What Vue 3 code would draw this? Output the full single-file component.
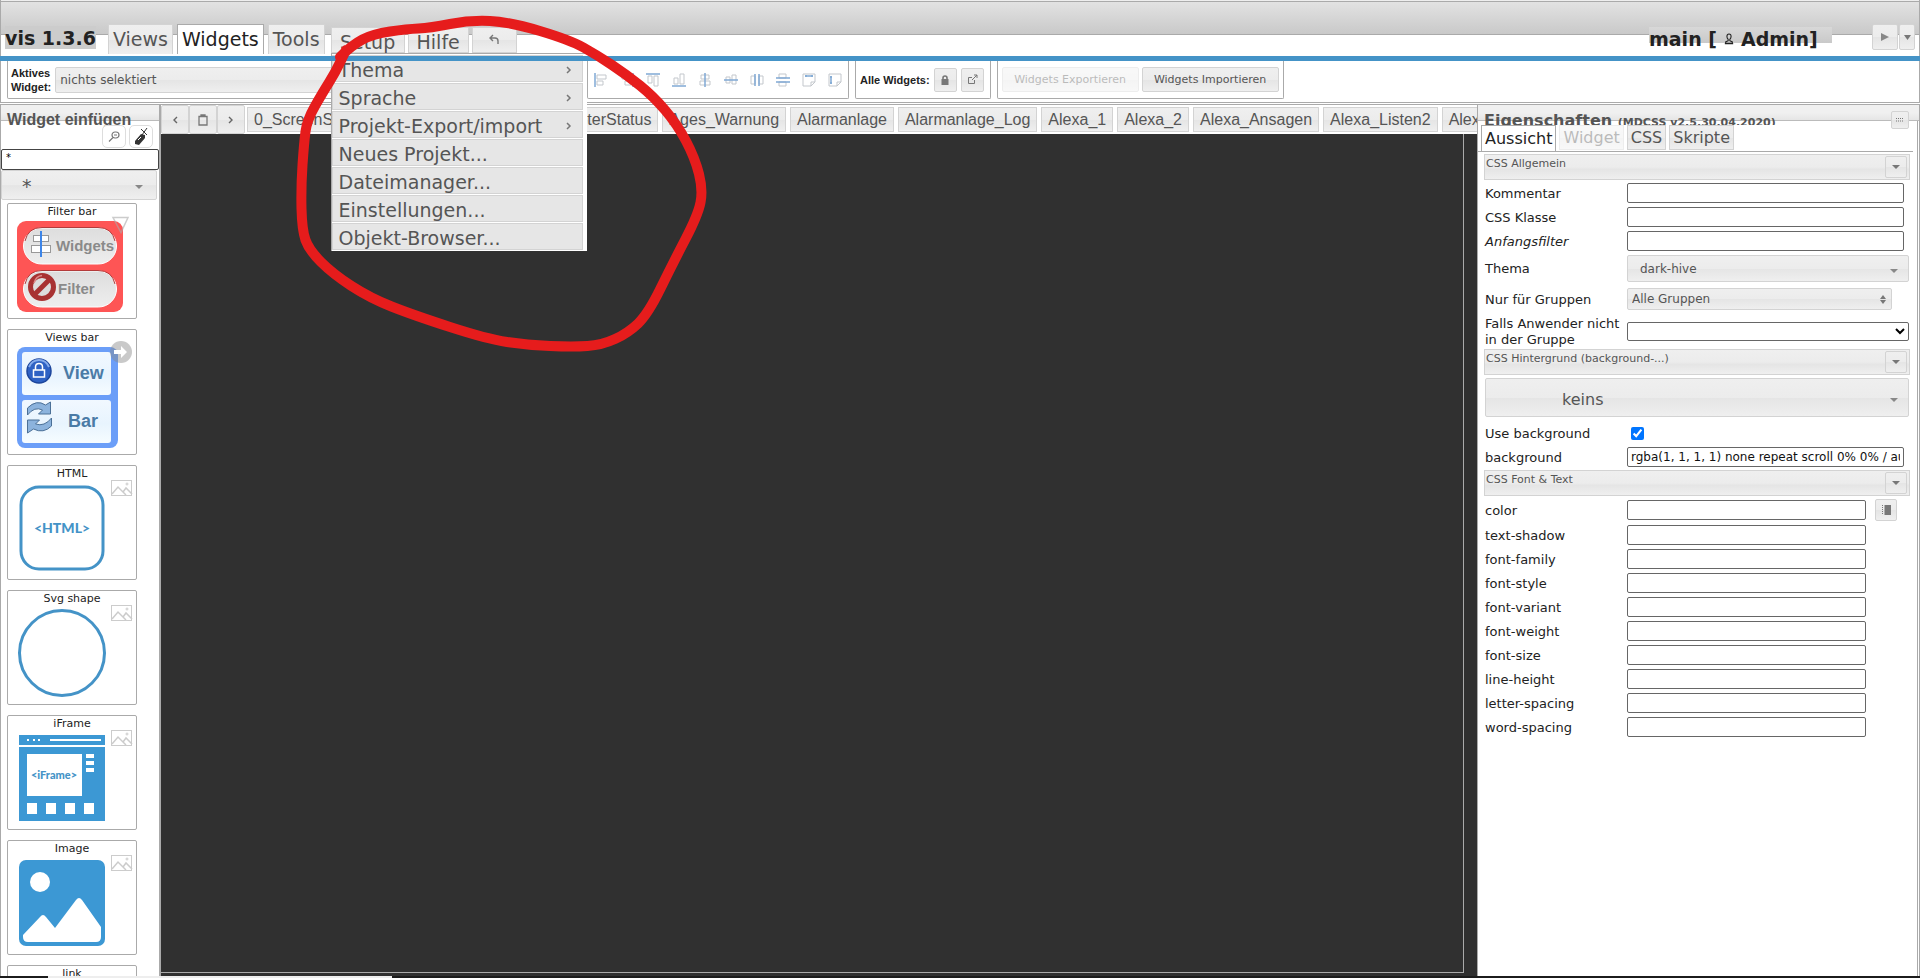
<script setup>
import { ref } from 'vue'

const tabs = ['Views', 'Widgets', 'Tools']
const menu = [
  { label: 'Thema', sub: true },
  { label: 'Sprache', sub: true },
  { label: 'Projekt-Export/import', sub: true },
  { label: 'Neues Projekt...' },
  { label: 'Dateimanager...' },
  { label: 'Einstellungen...' },
  { label: 'Objekt-Browser...' },
]
const views = ['AdapterStatus', 'Ages_Warnung', 'Alarmanlage', 'Alarmanlage_Log', 'Alexa_1', 'Alexa_2', 'Alexa_Ansagen', 'Alexa_Listen2', 'Alexa_Musik']
const alignIcons = [
  { b: 'M1 0v14', g: 'M3 2h9v4h-9zM3 8h6v4h-6z' },
  { b: 'M13 0v14', g: 'M2 2h9v4h-9zM5 8h6v4h-6z' },
  { b: 'M0 1h14', g: 'M2 3h4v7h-4zM8 3h4v10h-4z' },
  { b: 'M0 13h14', g: 'M2 5h4v6h-4zM8 1h4v10h-4z' },
  { b: 'M7 0v14', g: 'M3 2h8v4h-8zM2 8h10v4h-10z' },
  { b: 'M0 7h14', g: 'M2 4h4v6h-4zM8 2h4v9h-4z' },
  { b: 'M5 1v12M9 1v12', g: 'M1 3h4v8h-4zM9 3h4v8h-4z' },
  { b: 'M0 5h14M0 9h14', g: 'M3 1h7v4h-7zM3 9h7v4h-7z' },
  { b: 'M3 3h8M4 2v2M10 2v2', g: 'M1 1h12v8l-4 4h-8zM13 9h-4v4' },
  { b: 'M3 3v8M2 4h2M2 10h2', g: 'M1 1h12v8l-4 4h-8zM13 9h-4v4' },
]
const search = ref('*')
const useBackground = ref(true)
const background = ref('rgba(1, 1, 1, 1) none repeat scroll 0% 0% / auto padding-box border-box')
const fontRows = ['text-shadow', 'font-family', 'font-style', 'font-variant', 'font-weight', 'font-size', 'line-height', 'letter-spacing', 'word-spacing']

// Freehand marker stroke around the setup menu
const points = [
  [340, 57], [352, 45], [373, 34], [407, 29], [430, 28], [470, 20], [510, 22], [570, 40], [597, 55], [627, 75],
  [653, 96], [677, 124], [695, 158], [703, 190], [698, 215], [673, 263], [648, 314], [628, 333], [602, 345],
  [573, 347], [527, 345], [487, 339], [413, 315], [370, 298], [333, 274], [309, 250], [302, 230], [301, 187],
  [304, 143], [307, 120], [323, 92], [335, 73], [346, 50],
]
let stroke = `M${points[0].join(' ')}`
for (let i = 1; i < points.length - 1; i++) {
  const [x, y] = points[i]
  const [nx, ny] = points[i + 1]
  stroke += `Q${x} ${y} ${(x + nx) / 2} ${(y + ny) / 2}`
}
stroke += `L${points[points.length - 1].join(' ')}`
</script>

<template>
  <div class="app">
    <header class="top">
      <h1 class="brand">vis 1.3.6</h1>
      <nav class="tabs">
        <button v-for="t in tabs" :key="t" type="button" class="tab" :class="{ active: t === 'Widgets' }">{{ t }}</button>
      </nav>
      <nav class="menubar">
        <div class="setup">
          <button type="button" class="menu-btn wide">Setup</button>
          <ul class="menu">
            <li v-for="m in menu" :key="m.label">
              <button type="button" class="menu-item">
                {{ m.label }}
                <svg v-if="m.sub" width="6" height="8" viewBox="0 0 6 8"><path d="M1 1l3 3-3 3" fill="none" stroke="#777" stroke-width="1.5" /></svg>
              </button>
            </li>
          </ul>
        </div>
        <button type="button" class="menu-btn">Hilfe</button>
        <button type="button" class="menu-btn undo" aria-label="Undo">
          <svg width="12" height="12" viewBox="0 0 12 12"><path d="M5 1L2 4l3 3M2 4h5q3 0 3 3v3" fill="none" stroke="#777" stroke-width="1.4" /></svg>
        </button>
      </nav>
      <div class="user">
        <span class="mark">main [<svg width="10" height="12" viewBox="0 0 12 14"><path d="M6 1q-2.500 0-2.500 3 0 2 1.500 3.500v1.500l-3 1.500v1.500h8v-1.500l-3-1.500v-1.500q1.500-1.500 1.500-3.500 0-3-2.500-3zM1 12.500h10" fill="none" stroke="#222" stroke-width="1.3" /></svg>
          <span>Admin]</span></span>
      </div>
      <div class="run">
        <button type="button" class="btn play" aria-label="Start"><svg width="8" height="8" viewBox="0 0 8 8"><path d="M0 0l8 4-8 4z" fill="#888" /></svg></button>
        <button type="button" class="btn more" aria-label="Mehr"><svg width="7" height="5" viewBox="0 0 7 5"><path d="M0 0h7l-3.500 5z" fill="#777" /></svg></button>
      </div>
    </header>
    <div class="accent"></div>

    <section class="toolbar">
      <div class="group active-widget">
        <label for="aw">Aktives<br>Widget:</label>
        <select id="aw" class="sel"><option>nichts selektiert</option></select>
      </div>
      <div class="group icons">
        <button v-for="(ic, i) in alignIcons" :key="i" type="button" class="icon-btn" :aria-label="'Ausrichten ' + (i + 1)">
          <svg width="14" height="14" viewBox="0 0 14 14" fill="none"><path :d="ic.g" stroke="#c3c7cc" /><path :d="ic.b" stroke="#7fa8d4" stroke-width="1.500" /></svg>
        </button>
      </div>
      <div class="group all">
        <b>Alle Widgets:</b>
        <button type="button" class="btn sq" aria-label="Sperren"><svg width="10" height="12" viewBox="0 0 10 12"><path d="M3 6V4q0-2 2-2t2 2v2" fill="none" stroke="#777" stroke-width="1.600" /><path d="M1.500 5h7v6h-7z" fill="#777" /></svg></button>
        <button type="button" class="btn sq" aria-label="Öffnen"><svg width="11" height="11" viewBox="0 0 11 11" fill="none" stroke="#777"><path d="M5 3.500H1.500v6h6V6M5 6l5-5M7 1h3v3" /></svg></button>
      </div>
      <div class="group transfer">
        <button type="button" class="btn text" disabled>Widgets Exportieren</button>
        <button type="button" class="btn text">Widgets Importieren</button>
      </div>
    </section>

    <main class="body">
      <aside class="left">
        <h2 class="left-title">Widget einfügen</h2>
        <div class="left-tools">
          <button type="button" class="round" aria-label="Suche"><svg width="12" height="12" viewBox="0 0 12 12" fill="none" stroke="#777" stroke-width="1.200"><rect x="4" y="1" width="7" height="6" rx="3" /><path d="M6 4h3M5 6.500L1 10.500" /></svg></button>
          <button type="button" class="round" aria-label="Filter löschen"><svg width="14" height="18" viewBox="0 0 14 18"><path d="M1 13l6-7 4 1v3l-6 7-4-1z" fill="#333" /><path d="M7 1l6 6M13 0L8 7" stroke="#333" /><path d="M4 12l3-3" stroke="#fff" /></svg></button>
        </div>
        <input v-model="search" class="search" aria-label="Widget suchen">
        <div class="arrowed set"><select class="sel big" aria-label="Widgetset"><option>*</option></select></div>

        <div class="cards">
          <article class="card">
            <h3>Filter bar</h3>
            <svg width="128" height="99" viewBox="0 0 128 99">
              <defs><linearGradient id="pill" x2="0" y2="1"><stop offset="0" stop-color="#ddd" /><stop offset="1" stop-color="#eee" /></linearGradient></defs>
              <rect x="9" y="2" width="106" height="91" rx="9" fill="#fe5555" />
              <g fill="url(#pill)" stroke="#fff"><rect x="15.500" y="9" width="93" height="36" rx="18" /><rect x="15.500" y="52" width="93" height="36" rx="18" /></g>
              <path d="M17 22q3-13.500 17-13.500h56q14 0 17 13.500M17 65q3-13.500 17-13.500h56q14 0 17 13.500" fill="none" stroke="#b33b3b" />
              <g fill="#fff" stroke="#999"><rect x="25.500" y="16.500" width="15" height="6" /><rect x="23.500" y="26.500" width="19" height="7" /></g>
              <path d="M33 12v26" stroke="#3d85e8" stroke-width="2" />
              <circle cx="34" cy="68" r="11.500" fill="#ddd" stroke="#a83232" stroke-width="5" /><path d="M26 76l16-16" stroke="#a83232" stroke-width="5" />
              <path d="M26 64q2-7 8-7.500" fill="none" stroke="#dd8a8a" stroke-width="1.500" />
              <text x="48" y="32" class="g14">Widgets</text><text x="50" y="75" class="g14">Filter</text>
              <path d="M105-1.500h15l-7 15z" fill="none" stroke="#aaa" stroke-opacity=".6" stroke-width="1.500" />
            </svg>
          </article>
          <article class="card">
            <h3>Views bar</h3>
            <svg width="128" height="109" viewBox="0 0 128 109">
              <defs><linearGradient id="cell" x2="0" y2="1"><stop offset="0" stop-color="#f1f8ff" /><stop offset=".55" stop-color="#e8f4fe" /><stop offset="1" stop-color="#f6fcff" /></linearGradient></defs>
              <rect x="9" y="2" width="101" height="101" rx="8" fill="#6b9ef8" />
              <rect x="14" y="7" width="89" height="43" rx="3" fill="url(#cell)" /><rect x="14" y="55" width="89" height="43" rx="3" fill="url(#cell)" />
              <circle cx="31" cy="26" r="12" fill="#2f62c4" stroke="#1d469c" stroke-width="1.500" /><path d="M21 22q3-7 10-7t10 7" fill="none" stroke="#86acec" stroke-width="2" />
              <path d="M27.500 25v-3q0-3.500 3.500-3.500t3.500 3.500v3" fill="none" stroke="#fff" stroke-width="1.500" /><rect x="25.500" y="25" width="11" height="7" fill="none" stroke="#fff" stroke-width="1.500" />
              <g fill="#8cb3dd" stroke="#4b7097"><path d="M19.500 70v-7q9-9 18-3l5-3v12h-12l4-4q-8-4-15 5z" /><path d="M43.500 73v8q-8 8-18 3l-6 4V75h12l-4 4q9 3 16-6z" /></g>
              <text x="55" y="34" class="b18">View</text><text x="60" y="82" class="b18">Bar</text>
              <circle cx="113" cy="7" r="11" fill="#888" fill-opacity=".45" /><path d="M106 5h7V1l6 6-6 6V9h-7z" fill="#fff" />
            </svg>
          </article>
          <article v-for="kind in ['HTML', 'Svg shape', 'iFrame', 'Image', 'link']" :key="kind" class="card">
            <h3>{{ kind }}</h3>
            <svg width="128" height="98" viewBox="0 0 128 98">
              <g fill="none" stroke="#ccc"><rect x="103.500" y="-.5" width="20" height="15" /><path d="M104 13l6-7 8 8M115 11l3-4 6 6" stroke-width="1.500" /><circle cx="119" cy="3" r="1" /></g>
              <g v-if="kind === 'HTML'"><rect x="13" y="6" width="82" height="82" rx="18" class="line" /><text x="54" y="52" class="code14">&lt;HTML&gt;</text></g>
              <circle v-else-if="kind === 'Svg shape'" cx="54" cy="47" r="42.500" class="line" />
              <g v-else-if="kind === 'iFrame'">
                <path d="M11 4h86v10h-86zM11 16h86v74h-86z" fill="#3c98d4" />
                <path d="M19 8h2v2h-2zM25 8h2v2h-2zM30 8h2v2h-2zM42 8h51v2h-51zM19 23h55v42h-55zM78 23h8v4h-8zM78 30h8v4h-8zM78 37h8v4h-8zM19 72h10v11h-10zM38 72h10v11h-10zM57 72h10v11h-10zM76 72h10v11h-10z" fill="#fff" />
                <text x="46" y="48" class="code11">&lt;iFrame&gt;</text>
              </g>
              <g v-else-if="kind === 'Image'">
                <rect x="11" y="4" width="86" height="86" rx="7" fill="#3c98d4" /><circle cx="32" cy="26" r="10" fill="#fff" />
                <path d="M15 79L32 61q3-4 6 0l9 11 21-28q3-4 6 0l19 27v10q0 5-5 5H20q-5 0-5-5z" fill="#fff" />
              </g>
            </svg>
          </article>
        </div>
      </aside>

      <section class="center">
        <div class="view-tabs">
          <div class="nav-btns">
            <button type="button" class="btn nav" aria-label="Zurück"><svg width="6" height="8" viewBox="0 0 6 8"><path d="M5 1L2 4l3 3" fill="none" stroke="#666" stroke-width="1.400" /></svg></button>
            <button type="button" class="btn nav" aria-label="Ablage"><svg width="10" height="12" viewBox="0 0 10 12"><path d="M1 2.500h8v8.500h-8zM3 2V1h4v1" fill="none" stroke="#777" stroke-width="1.300" /></svg></button>
            <button type="button" class="btn nav" aria-label="Weiter"><svg width="6" height="8" viewBox="0 0 6 8"><path d="M1 1l3 3-3 3" fill="none" stroke="#666" stroke-width="1.400" /></svg></button>
          </div>
          <button type="button" class="view first">0_ScreenSaver</button>
          <button v-for="v in views" :key="v" type="button" class="view">{{ v }}</button>
        </div>
        <div class="canvas"><div class="sheet"></div></div>
      </section>

      <aside class="right">
        <div class="right-head">
          <h2>Eigenschaften <small>(MDCSS v2.5.30.04.2020)</small></h2>
          <button type="button" class="btn grip" aria-label="Andocken"><svg width="8" height="4" viewBox="0 0 8 4"><path d="M0 .5h8M0 3h8" stroke="#777" stroke-dasharray="1 1" /></svg></button>
        </div>
        <nav class="prop-tabs">
          <button type="button" class="ptab active">Aussicht</button>
          <button type="button" class="ptab" disabled>Widget</button>
          <button type="button" class="ptab">CSS</button>
          <button type="button" class="ptab">Skripte</button>
        </nav>
        <form class="props" @submit.prevent>
          <div class="bar">CSS Allgemein<button type="button" class="btn fold" aria-label="Einklappen"></button></div>
          <div class="row"><label for="p1">Kommentar</label><input id="p1" class="field"></div>
          <div class="row"><label for="p2">CSS Klasse</label><input id="p2" class="field"></div>
          <div class="row"><label for="p3"><i>Anfangsfilter</i></label><input id="p3" class="field"></div>
          <div class="row theme"><label for="p4">Thema</label><div class="arrowed"><select id="p4" class="sel"><option>dark-hive</option></select></div></div>
          <div class="row groups"><label for="p5">Nur für Gruppen</label><div class="multi"><select id="p5" class="sel"><option>Alle Gruppen</option></select><svg width="6" height="9" viewBox="0 0 6 9"><path d="M3 0l3 4H0zM0 5h6l-3 4z" fill="#777" /></svg></div></div>
          <div class="row users"><label for="p6">Falls Anwender nicht in der Gruppe</label><select id="p6" class="native"><option></option></select></div>
          <div class="bar">CSS Hintergrund (background-...)<button type="button" class="btn fold" aria-label="Einklappen"></button></div>
          <div class="preset"><div class="arrowed"><select class="sel" aria-label="Hintergrund"><option>keins</option></select></div></div>
          <div class="row"><label for="p7">Use background</label><input id="p7" v-model="useBackground" type="checkbox" class="check"></div>
          <div class="row"><label for="p8">background</label><input id="p8" v-model="background" class="field"></div>
          <div class="bar">CSS Font &amp; Text<button type="button" class="btn fold" aria-label="Einklappen"></button></div>
          <div class="row color"><label for="p9">color</label><input id="p9" class="field"><button type="button" class="btn pick" aria-label="Farbe wählen"><svg width="9" height="10" viewBox="0 0 9 10"><path d="M2.500 0H9v10H2.500z" fill="#777" /><path d="M.5 0v10" stroke="#777" stroke-dasharray="1 1" /></svg></button></div>
          <div v-for="f in fontRows" :key="f" class="row font"><label :for="f">{{ f }}</label><input :id="f" class="field"></div>
        </form>
      </aside>
    </main>
    <footer class="strip"></footer>

    <svg class="marker" width="720" height="370" viewBox="0 0 720 370" aria-hidden="true"><path :d="stroke" /></svg>
  </div>
</template>

<style>
body { margin: 0; overflow: hidden; }
</style>

<style scoped>
* { box-sizing: border-box; }
.app { position: relative; display: flex; flex-direction: column; height: 100vh; overflow: hidden; background: #fff; color: #222; font-family: "DejaVu Sans", Verdana, sans-serif; font-size: 12px; }
button, input, select { font-family: inherit; margin: 0; }
button { padding: 0; }
h1, h2, h3, ul { margin: 0; padding: 0; }
svg { display: block; overflow: visible; flex: none; }
.btn, .sel, .menu-btn, .tab, .ptab, .view { border: 1px solid #d3d3d3; background: linear-gradient(#efefef 0%, #ececec 50%, #e5e5e5 52%, #efefef 100%); color: #555; }
.btn { display: flex; align-items: center; justify-content: center; border-radius: 2px; }

.top { display: flex; align-items: flex-start; flex: none; height: 56px; padding: 0 4px; border: solid #aaa; border-width: 0 1px; background: linear-gradient(#eee 0 1px, #aaa 1px 2px, #e2e2e2 2px, #c9c9c9 34px, #aaa 34px 35px, #fff 35px); }
.brand { margin-top: 26px; height: 23px; line-height: 24px; background: #ccc; font-size: 19px; font-weight: 700; }
.tabs { display: flex; gap: 4px; margin: 24px 0 0 12px; }
.tab { height: 30px; padding: 0 4px 2px; border-bottom: 0; font-size: 19px; line-height: 26px; }
.tab.active { background: #fff; color: #222; border-color: #aaa; }
.menubar { display: flex; gap: 3px; margin: 27px 0 0 6px; }
.setup { position: relative; }
.menu-btn { display: block; height: 26px; padding: 0 8px; font-size: 19px; line-height: 29px; }
.menu-btn.wide { width: 74px; }
.undo { display: flex; justify-content: center; width: 45px; padding-top: 6px; }
.menu { position: absolute; z-index: 10; top: 26px; left: 0; width: 256px; padding: 1px 4px 0 0; border: 1px solid #aaa; border-width: 1px 0 0 1px; background: #fff; list-style: none; }
.menu-item { display: flex; align-items: center; justify-content: space-between; width: 100%; height: 27px; margin-bottom: 1px; padding: 3px 10px 0 6px; border: 1px solid #d3d3d3; background: #e6e6e6; color: #555; font-size: 19px; line-height: 22px; }
.user { margin: 27px 40px 0 auto; }
.mark { display: flex; align-items: center; gap: 7px; width: 183px; height: 16px; padding-top: 7px; line-height: 22px; background: linear-gradient(#d8d8d8, #c9c9c9); font-size: 19px; font-weight: 700; white-space: nowrap; }
.run { display: flex; gap: 1px; margin-top: 24px; }
.play { width: 26px; height: 26px; }
.more { width: 16px; height: 26px; }
.accent { position: relative; z-index: 20; flex: none; height: 5px; background: #4493c7; }

.toolbar { display: flex; gap: 6px; flex: none; height: 42px; padding: 0 6px 3px; border: 1px solid #aaa; border-top: 0; font-family: "Liberation Sans", Arial, sans-serif; }
.group { display: flex; align-items: center; border: 1px solid #aaa; border-top: 0; border-radius: 0 0 2px 2px; }
.active-widget { width: 574px; padding-left: 3px; font-size: 11px; font-weight: 700; line-height: 14px; }
.active-widget .sel { width: 500px; height: 26px; margin-left: 4px; padding-left: 4px; }
.sel { appearance: none; border-radius: 2px; font-family: "DejaVu Sans", Verdana, sans-serif; font-size: 12px; }
.icons { width: 262px; }
.icon-btn { display: flex; justify-content: center; width: 26px; border: 0; background: none; }
.all { gap: 4px; padding: 0 6px 0 4px; font-size: 11px; }
.sq { width: 23px; height: 24px; }
.transfer { gap: 3px; padding: 0 4px; }
.text { width: 137px; height: 25px; font-family: "DejaVu Sans", Verdana, sans-serif; font-size: 11px; }
.text:disabled, .ptab:disabled { opacity: .4; }

.body { display: grid; grid-template-columns: 161px minmax(0, 1fr) 443px; flex: 1; min-height: 0; padding-top: 1px; }
.left { display: flex; flex-direction: column; min-height: 0; overflow: hidden; border: 1px solid #aaa; border-right-width: 2px; border-bottom: 0; }
.left-title { flex: none; height: 20px; padding-left: 6px; background: linear-gradient(#f0f0f0 0 8px, #e5e5e5 15px, #bbb 15px 16px, #fff 16px); color: #555; font: 700 16px/30px "Liberation Sans", Arial, sans-serif; }
.left-tools { display: flex; justify-content: flex-end; gap: 3px; flex: none; height: 24px; padding-right: 6px; }
.round { display: flex; align-items: center; justify-content: center; width: 24px; height: 23px; border: 1px solid #ddd; border-radius: 5px; background: #fff; }
.search { flex: none; width: 100%; height: 21px; padding: 0 4px 4px; border: 1px solid #444; border-radius: 2px; font-size: 10px; }
.arrowed { position: relative; display: flex; }
.arrowed::after { content: ""; position: absolute; top: 50%; right: 11px; border: 4px solid transparent; border-top-color: #888; border-bottom: 0; pointer-events: none; }
.set { flex: none; width: 156px; height: 30px; }
.set::after { right: 14px; }
.set .sel, .arrowed .sel { width: 100%; }
.set .big { padding: 2px 0 0 20px; font-size: 19px; }
.cards { display: flex; flex-direction: column; gap: 10px; padding: 3px 0 0 6px; }
.card { flex: none; width: 130px; border: 1px solid #aaa; border-radius: 2px; }
.card h3 { height: 15px; font-size: 11px; font-weight: 400; line-height: 15px; text-align: center; }
.g14, .b18 { font-family: "Liberation Sans", Arial, sans-serif; font-weight: 700; }
.g14 { font-size: 15px; fill: #8a8a8a; }
.b18 { font-size: 18px; fill: #4a7ba6; }
.line { fill: none; stroke: #4493c7; stroke-width: 3; }
.code14, .code11 { font-family: Lato, sans-serif; font-weight: 900; text-anchor: middle; fill: #4493c7; }
.code14 { font-size: 14px; }
.code11 { font-size: 11px; }

.center { display: flex; flex-direction: column; min-width: 0; }
.view-tabs { display: flex; align-items: center; gap: 4px; height: 30px; overflow: hidden; border-top: 1px solid #aaa; }
.nav-btns { display: flex; flex: none; margin-right: -2px; }
.nav { width: 28px; height: 29px; }
.view { flex: none; height: 25px; padding: 0 6px; font-family: "Liberation Sans", Arial, sans-serif; font-size: 16px; text-align: left; }
.view.first { width: 292px; }
.canvas { flex: 1; min-height: 0; padding: 0 13px 3px 0; background: #303030; }
.sheet { height: 100%; border: 1px solid #aaa; border-width: 0 1px 1px 0; }

.right { border: 1px solid #aaa; border-bottom: 0; box-shadow: inset -1px 0 #fff, inset -2px 0 #aaa; }
.right-head { display: flex; justify-content: space-between; height: 20px; padding: 0 10px 0 6px; background: linear-gradient(#f0f0f0 0 8px, #e5e5e5 15px, #bbb 15px 16px, transparent 16px); color: #555; }
.right-head h2 { height: 20px; overflow: hidden; font-size: 16px; line-height: 32px; }
.right-head small { font-size: 11px; }
.grip { width: 18px; height: 18px; margin-top: 6px; }
.prop-tabs { display: flex; gap: 3px; height: 27px; margin-right: 6px; padding-left: 3px; border-bottom: 1px solid #aaa; }
.ptab { height: 25px; padding: 0 3px; font-size: 16px; line-height: 24px; }
.ptab.active { height: 26px; background: #fff; border-color: #aaa; border-bottom: 0; color: #222; }
.props { padding: 1px 9px 0 7px; font-size: 13px; }
.bar { display: flex; align-items: flex-start; justify-content: space-between; height: 26px; margin: 1px 0 1px -1px; padding: 1px 2px 1px 1px; border: 1px solid #d3d3d3; background: linear-gradient(#efefef 0%, #ececec 50%, #e5e5e5 60%, #efefef 100%); color: #555; font-size: 11px; line-height: 16px; }
.fold { width: 22px; height: 22px; }
.fold::before { content: ""; border: 4px solid transparent; border-top-color: #777; border-bottom: 0; }
.row { display: grid; grid-template-columns: 142px minmax(0, 1fr); align-items: center; height: 24px; padding-right: 6px; line-height: 16px; }
.row label { padding-top: 1px; }
.field { width: 100%; height: 20px; padding: 0 3px; border: 1px solid #666; border-radius: 2px; font-size: 12px; color: #111; }
.row.theme { height: 31px; padding-right: 1px; }
.theme .sel { height: 27px; padding-left: 12px; }
.row.groups { height: 30px; padding-right: 18px; }
.multi { display: flex; align-items: center; position: relative; }
.multi .sel { width: 100%; height: 22px; padding-left: 4px; }
.multi svg { position: absolute; right: 6px; }
.row.users { height: 34px; padding-right: 1px; }
.native { width: 100%; height: 19px; border: 1px solid #666; border-radius: 2px; background: #fff; }
.preset { height: 45px; padding: 2px 1px 0 0; }
.preset .sel { height: 39px; padding: 3px 0 0 76px; font-size: 16px; }
.check { width: 13px; height: 13px; margin-left: 4px; }
.row.color { grid-template-columns: 142px minmax(0, 1fr) 22px; height: 26px; padding-right: 13px; }
.color .field { width: calc(100% - 9px); }
.row.font { padding-right: 44px; }
.pick { width: 22px; height: 22px; }

.strip { flex: none; height: 2px; background: linear-gradient(90deg, #1c1c1c 48px, #eee 48px 392px, #1c1c1c 392px); }
.marker { position: absolute; top: 0; left: 0; z-index: 30; pointer-events: none; }
.marker path { fill: none; stroke: #e61c1c; stroke-width: 10; stroke-linecap: round; stroke-linejoin: round; }
</style>
